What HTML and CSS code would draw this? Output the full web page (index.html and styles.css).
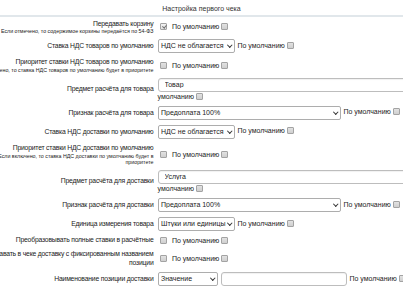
FILE: index.html
```html
<!DOCTYPE html>
<html lang="ru">
<head>
    <meta charset="UTF-8" />
    <meta name="viewport" content="width=device-width, initial-scale=1" />
    <title>Настройка первого чека</title>
    <link rel="stylesheet" href="styles.css">
</head>
<body>

<table class="settings">
    <colgroup>
        <col class="col-label">
        <col class="col-value">
    </colgroup>
    <thead>
        <tr>
            <th colspan="2">Настройка первого чека</th>
        </tr>
    </thead>
    <tbody>
        <tr>
            <td class="label">
                <div class="title">Передавать корзину</div>
                <div class="hint">Если отмечено, то содержимое корзины передаётся по 54-ФЗ</div>
            </td>
            <td class="value">
                <input type="checkbox" class="box first" checked>
                <label class="default">По умолчанию <input type="checkbox" class="box"></label>
            </td>
        </tr>
        <tr>
            <td class="label"><div class="title">Ставка НДС товаров по умолчанию</div></td>
            <td class="value">
                <span class="select sel-short"><select>
                    <option>НДС не облагается</option>
                </select></span>
                <label class="default">По умолчанию <input type="checkbox" class="box"></label>
            </td>
        </tr>
        <tr>
            <td class="label">
                <div class="title">Приоритет ставки НДС товаров по умолчанию</div>
                <div class="hint">Если включено, то ставка НДС товаров по умолчанию будет в приоритете</div>
            </td>
            <td class="value">
                <input type="checkbox" class="box first">
                <label class="default">По умолчанию <input type="checkbox" class="box"></label>
            </td>
        </tr>
        <tr>
            <td class="label"><div class="title">Предмет расчёта для товара</div></td>
            <td class="value">
                <input type="text" class="field field-wide" value="Товар">
                <label class="default">По умолчанию <input type="checkbox" class="box"></label>
            </td>
        </tr>
        <tr>
            <td class="label"><div class="title">Признак расчёта для товара</div></td>
            <td class="value">
                <span class="select sel-wide"><select>
                    <option>Предоплата 100%</option>
                </select></span>
                <label class="default">По умолчанию <input type="checkbox" class="box"></label>
            </td>
        </tr>
        <tr>
            <td class="label"><div class="title">Ставка НДС доставки по умолчанию</div></td>
            <td class="value">
                <span class="select sel-short"><select>
                    <option>НДС не облагается</option>
                </select></span>
                <label class="default">По умолчанию <input type="checkbox" class="box"></label>
            </td>
        </tr>
        <tr>
            <td class="label">
                <div class="title">Приоритет ставки НДС доставки по умолчанию</div>
                <div class="hint">Если включено, то ставка НДС доставки по умолчанию будет в<br>приоритете</div>
            </td>
            <td class="value">
                <input type="checkbox" class="box first">
                <label class="default">По умолчанию <input type="checkbox" class="box"></label>
            </td>
        </tr>
        <tr>
            <td class="label"><div class="title">Предмет расчёта для доставки</div></td>
            <td class="value">
                <input type="text" class="field field-wide" value="Услуга">
                <label class="default">По умолчанию <input type="checkbox" class="box"></label>
            </td>
        </tr>
        <tr>
            <td class="label"><div class="title">Признак расчёта для доставки</div></td>
            <td class="value">
                <span class="select sel-wide"><select>
                    <option>Предоплата 100%</option>
                </select></span>
                <label class="default">По умолчанию <input type="checkbox" class="box"></label>
            </td>
        </tr>
        <tr>
            <td class="label"><div class="title">Единица измерения товара</div></td>
            <td class="value">
                <span class="select sel-short"><select>
                    <option>Штуки или единицы</option>
                </select></span>
                <label class="default">По умолчанию <input type="checkbox" class="box"></label>
            </td>
        </tr>
        <tr>
            <td class="label"><div class="title">Преобразовывать полные ставки в расчётные</div></td>
            <td class="value">
                <input type="checkbox" class="box first">
                <label class="default">По умолчанию <input type="checkbox" class="box"></label>
            </td>
        </tr>
        <tr>
            <td class="label"><div class="title">Передавать в чеке доставку с фиксированным названием позиции</div></td>
            <td class="value">
                <input type="checkbox" class="box first">
                <label class="default">По умолчанию <input type="checkbox" class="box"></label>
            </td>
        </tr>
        <tr>
            <td class="label"><div class="title">Наименование позиции доставки</div></td>
            <td class="value">
                <span class="select sel-name"><select>
                    <option>Значение</option>
                </select></span>
                <input type="text" class="field field-name" value="">
                <label class="default">По умолчанию <input type="checkbox" class="box"></label>
            </td>
        </tr>
    </tbody>
</table>

</body>
</html>
```

FILE: styles.css
```css
html {
    overflow: hidden;
}
body {
    font-family: "Liberation Sans", Arial, sans-serif;
    font-size: 7px;
    color: #222;
    display: flex;
    justify-content: center;
    margin: 0;
    padding: 4px 8px 0;
    background-color: #fff;
}
.settings {
    flex: none;
    width: 468px;
    border-collapse: collapse;
    table-layout: fixed;
}
.col-label {
    width: 189px;
}
/* Заголовок блока */
.settings th {
    font-weight: normal;
    font-size: 7px;
    color: #333;
    text-align: center;
    line-height: 9px;
    padding: 0 0 1.5px;
    border-bottom: 2px solid #e1e7eb;
}
.settings td {
    padding: 2.5px 0;
    vertical-align: middle;
}
.settings td.label {
    padding: 3px 3px 2px 0;
    text-align: right;
}
.settings td.value {
    padding-left: 1px;
    line-height: 9px;
}
.title {
    font-size: 6.8px;
    letter-spacing: -0.2px;
    line-height: 8.5px;
}
/* Пояснение под названием: мелкий шрифт */
.hint {
    font-size: 5.3px;
    line-height: 6.3px;
}
.box {
    appearance: none;
    width: 7px;
    height: 7px;
    margin: 0;
    vertical-align: -1px;
    border: 1px solid #a3a3a3;
    border-radius: 1px;
    background: linear-gradient(#e2e2e2, #cfcfcf);
    position: relative;
}
.box.first {
    margin: 0 3px 0 2.5px;
}
.box:checked {
    background: linear-gradient(#f2f2f2, #e0e0e0);
}
.box:checked::before {
    content: "";
    position: absolute;
    left: 1.5px;
    top: 0;
    width: 1.5px;
    height: 3px;
    border: solid #707070;
    border-width: 0 1px 1px 0;
    transform: rotate(40deg);
}
/* Выпадающий список со своей стрелкой */
.select {
    display: inline-block;
    position: relative;
    vertical-align: middle;
    height: 14px;
    margin-right: 1px;
}
.select select {
    appearance: none;
    width: 100%;
    height: 14px;
    padding: 0 7px 0 2.5px;
    border: 1px solid #adadad;
    border-radius: 2px;
}
.select::after {
    content: "";
    position: absolute;
    right: 3.5px;
    top: 4px;
    width: 2.5px;
    height: 2.5px;
    border: solid #333;
    border-width: 0 1.2px 1.2px 0;
    transform: rotate(45deg);
    pointer-events: none;
}
.sel-short {
    width: 77px;
}
.sel-wide {
    width: 183px;
}
.sel-name {
    width: 60px;
}
.select select,
.field {
    font-family: "Liberation Sans", Arial, sans-serif;
    font-size: 7px;
    color: #222;
    box-sizing: border-box;
    background-color: #fff;
    margin: 0;
}
.field {
    height: 14px;
    vertical-align: middle;
    border: 1px solid #bdbdbd;
    border-radius: 3px;
    padding: 0 6px;
    box-shadow: inset 0 1px 1px rgba(0, 0, 0, 0.06);
}
.field-wide {
    width: 251px;
}
.field-name {
    width: 126px;
    margin-left: 1px;
}
```
